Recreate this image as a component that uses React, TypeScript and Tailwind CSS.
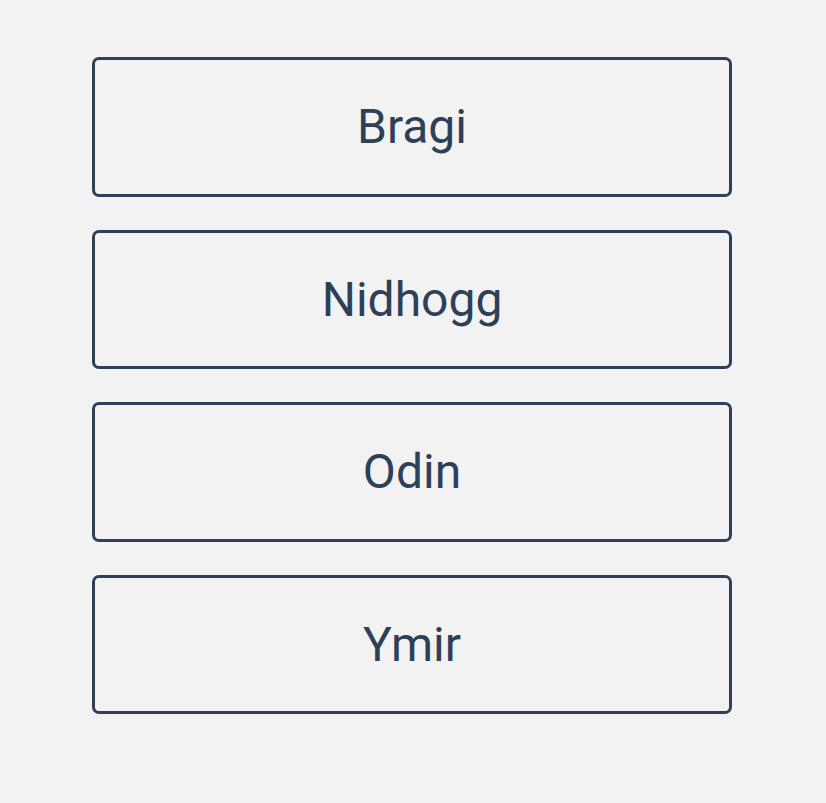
export default function App() {
  const items = [
    { t: "Bragi", h: "h-[140px]" },
    { t: "Nidhogg", h: "h-[139px]" },
    { t: "Odin", h: "h-[140px]" },
    { t: "Ymir", h: "h-[139px]" },
  ];
  return (
    <div className="min-h-[803px] w-full bg-[#f2f2f2] pt-[57px]" style={{ fontFamily: "Roboto, 'Noto Sans', sans-serif" }}>
      <div className="ml-[92px] flex w-[640px] flex-col gap-[33px]">
        {items.map((it) => (
          <button
            key={it.t}
            className={`flex ${it.h} w-full items-center justify-center rounded-[7px] border-[3px] border-[#2e3f58] bg-transparent text-[48px] text-[#2e3f58]`}
          >
            {it.t}
          </button>
        ))}
      </div>
    </div>
  );
}
